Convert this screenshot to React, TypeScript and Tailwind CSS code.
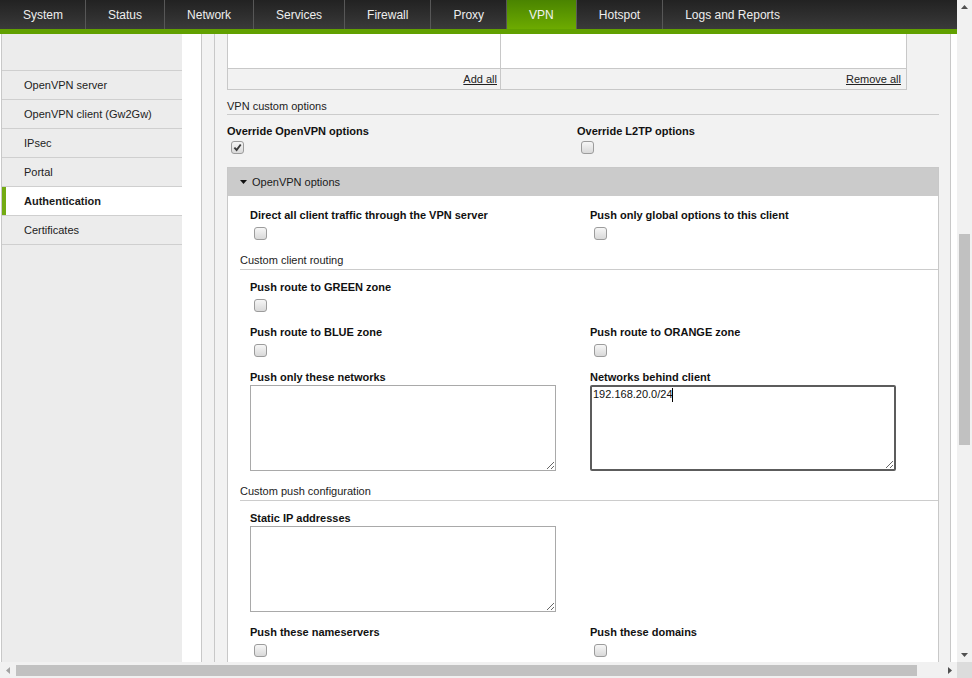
const tabs = ['System', 'Status', 'Network', 'Services', 'Firewall', 'Proxy', 'VPN', 'Hotspot', 'Logs and Reports'];

const sideItems = ['OpenVPN server', 'OpenVPN client (Gw2Gw)', 'IPsec', 'Portal', 'Authentication', 'Certificates'];

function Checkbox({ checked }: { checked?: boolean }) {
  return (
    <span className="flex h-[13px] w-[13px] items-center justify-center rounded-[3px] border border-[#9c9c9c] bg-linear-to-b from-[#f6f6f6] to-[#d9d9d9]">
      {checked && (
        <svg width="9" height="9" viewBox="0 0 10 10">
          <path d="M1.5 5.2 L4 7.8 L8.6 1.6" fill="none" stroke="#3a3a3a" strokeWidth="2.1" />
        </svg>
      )}
    </span>
  );
}

function CheckField({ label, checked, gap = 'mt-[5px]' }: { label: string; checked?: boolean; gap?: string }) {
  return (
    <div>
      <div className="font-bold leading-[14px] text-[#111]">{label}</div>
      <div className={`${gap} mb-[1px] ml-[4px]`}>
        <Checkbox checked={checked} />
      </div>
    </div>
  );
}

function AreaField({ label, value, focused }: { label: string; value?: string; focused?: boolean }) {
  return (
    <div>
      <div className="font-bold leading-[14px] text-[#111]">{label}</div>
      <div className="relative mt-[1px] w-[306px]">
        <textarea
          readOnly
          defaultValue={value}
          className={
            focused
              ? 'block h-[86px] w-[306px] resize rounded-[2px] border-2 border-[#5c5c5c] bg-white px-[1px] py-[1px] text-[11px] leading-[13px] text-[#111] outline-none'
              : 'block h-[86px] w-[306px] resize border border-[#a9a9a9] bg-white p-[2px] text-[11px] leading-[13px] outline-none'
          }
        />
        {focused && <span className="absolute left-[82px] top-[3px] h-[14px] w-px bg-black" />}
      </div>
    </div>
  );
}

function SectionTitle({ children, className = '' }: { children: string; className?: string }) {
  return (
    <div className={`${className} border-b border-[#cccccc] pb-[2px] leading-[14px] text-[#222]`}>{children}</div>
  );
}

function VScroll() {
  return (
    <div className="flex w-[15px] flex-col bg-[#f1f1f1]">
      <div className="flex h-[15px] items-start justify-center pt-[5px]">
        <svg width="7" height="4" viewBox="0 0 7 4">
          <path d="M0 4h7L3.5 0z" fill="#505050" />
        </svg>
      </div>
      <div className="flex-1 pl-[2px] pt-[219px]">
        <div className="h-[211px] w-[11px] bg-[#c1c1c1]" />
      </div>
      <div className="flex h-[15px] items-center justify-center">
        <svg width="7" height="4" viewBox="0 0 7 4">
          <path d="M0 0h7L3.5 4z" fill="#505050" />
        </svg>
      </div>
    </div>
  );
}

function HScroll() {
  return (
    <div className="flex h-[16px]">
      <div className="flex flex-1 bg-[#f1f1f1]">
        <div className="flex w-[16px] items-center justify-center">
          <svg width="4" height="7" viewBox="0 0 4 7">
            <path d="M4 0v7L0 3.5z" fill="#a3a3a3" />
          </svg>
        </div>
        <div className="pt-[3px]">
          <div className="h-[11px] w-[901px] bg-[#c1c1c1]" />
        </div>
        <div className="flex-1" />
        <div className="flex w-[15px] items-center justify-center">
          <svg width="4" height="7" viewBox="0 0 4 7">
            <path d="M0 0v7L4 3.5z" fill="#505050" />
          </svg>
        </div>
      </div>
      <div className="w-[15px] bg-[#dcdcdc]" />
    </div>
  );
}

export default function App() {
  return (
    <div className="flex h-[678px] w-[972px] flex-col overflow-hidden bg-white font-['Liberation_Sans',Arial,sans-serif] text-[11px] text-[#222]">
      <div className="flex min-h-0 flex-1">
        <div className="flex min-w-0 flex-1 flex-col">
          {/* top menu */}
          <nav className="flex h-[29px] shrink-0 bg-linear-to-b from-[#222222] to-[#3a3a3a]">
            {tabs.map((t) => (
              <div
                key={t}
                className={
                  t === 'VPN'
                    ? 'flex items-center border-r border-[#5a5a5a] bg-linear-to-b from-[#4a8400] to-[#6dab00] px-[22px] text-[12px] text-[#f2f2f2]'
                    : t === 'Logs and Reports'
                      ? 'flex items-center px-[22px] text-[12px] text-[#eeeeee]'
                      : t === 'System'
                        ? 'flex items-center border-r border-[#575757] pl-[23px] pr-[22px] text-[12px] text-[#eeeeee]'
                        : 'flex items-center border-r border-[#575757] px-[22px] text-[12px] text-[#eeeeee]'
                }
              >
                {t}
              </div>
            ))}
          </nav>
          <div className="h-[5px] shrink-0 bg-[#61a000]" />

          <div className="flex min-h-0 flex-1 overflow-hidden">
            <div className="w-px bg-white" />
            {/* sub menu */}
            <aside className="w-[181px] shrink-0 border-l border-[#c8c8c8] bg-[#ececec] pt-[36px]">
              <ul className="border-t border-[#cfcfcf]">
                {sideItems.map((s) =>
                  s === 'Authentication' ? (
                    <li key={s} className="flex h-[29px] items-stretch border-b border-[#cfcfcf] bg-white">
                      <span className="w-[4px] bg-[#73ab12]" />
                      <span className="flex items-center pl-[18px] font-bold text-[#1a1a1a]">{s}</span>
                    </li>
                  ) : (
                    <li key={s} className="flex h-[29px] items-center border-b border-[#cfcfcf] pl-[22px] text-[#222]">
                      {s}
                    </li>
                  )
                )}
              </ul>
            </aside>
            <div className="w-[19px] shrink-0" />

            {/* content */}
            <div className="w-[750px] shrink-0 border-x border-[#c8c8c8] bg-[#f2f2f2] pl-[12px]">
              <div className="h-full border-l border-[#c8c8c8] pl-[12px] pr-[11px]">
                <div className="w-[680px] border-x border-b border-[#c8c8c8]">
                  <div className="flex h-[35px] border-b border-[#c8c8c8] bg-white">
                    <div className="w-[273px] border-r border-[#c8c8c8]" />
                    <div className="flex-1" />
                  </div>
                  <div className="flex h-[20px] leading-[20px]">
                    <div className="w-[273px] border-r border-[#c8c8c8] pr-[3px] text-right">
                      <span className="underline">Add all</span>
                    </div>
                    <div className="flex-1 pr-[5px] text-right">
                      <span className="underline">Remove all</span>
                    </div>
                  </div>
                </div>

                <div className="mt-[9px] border-b border-[#cccccc] pb-[1px] leading-[14px] text-[#222]">VPN custom options</div>

                <div className="mt-[9px] grid grid-cols-[350px_1fr]">
                  <CheckField label="Override OpenVPN options" checked gap="mt-[3px]" />
                  <CheckField label="Override L2TP options" gap="mt-[3px]" />
                </div>

                <div className="mt-[12px] border border-[#c8c8c8] bg-white">
                  <div className="flex h-[28px] items-center gap-[5px] bg-[#cbcbcb] pl-[12px] text-[#1a1a1a]">
                    <svg width="7" height="4" viewBox="0 0 7 4">
                      <path d="M0 0h7L3.5 4z" fill="#111" />
                    </svg>
                    OpenVPN options
                  </div>
                  <div className="pb-[40px] pl-[12px] pt-[12px]">
                    <div className="ml-[10px] grid grid-cols-[340px_1fr]">
                      <CheckField label="Direct all client traffic through the VPN server" />
                      <CheckField label="Push only global options to this client" />
                    </div>

                    <SectionTitle className="mt-[12px]">Custom client routing</SectionTitle>

                    <div className="ml-[10px] mt-[10px] grid grid-cols-[340px_1fr]">
                      <CheckField label="Push route to GREEN zone" />
                    </div>
                    <div className="ml-[10px] mt-[12px] grid grid-cols-[340px_1fr]">
                      <CheckField label="Push route to BLUE zone" />
                      <CheckField label="Push route to ORANGE zone" />
                    </div>
                    <div className="ml-[10px] mt-[12px] grid grid-cols-[340px_1fr]">
                      <AreaField label="Push only these networks" />
                      <AreaField label="Networks behind client" value="192.168.20.0/24" focused />
                    </div>

                    <SectionTitle className="mt-[13px]">Custom push configuration</SectionTitle>

                    <div className="ml-[10px] mt-[10px] grid grid-cols-[340px_1fr]">
                      <AreaField label="Static IP addresses" />
                    </div>
                    <div className="ml-[10px] mt-[13px] grid grid-cols-[340px_1fr]">
                      <CheckField label="Push these nameservers" />
                      <CheckField label="Push these domains" />
                    </div>
                  </div>
                </div>
              </div>
            </div>
            <div className="w-[6px] shrink-0" />
          </div>
        </div>
        <VScroll />
      </div>
      <HScroll />
    </div>
  );
}
